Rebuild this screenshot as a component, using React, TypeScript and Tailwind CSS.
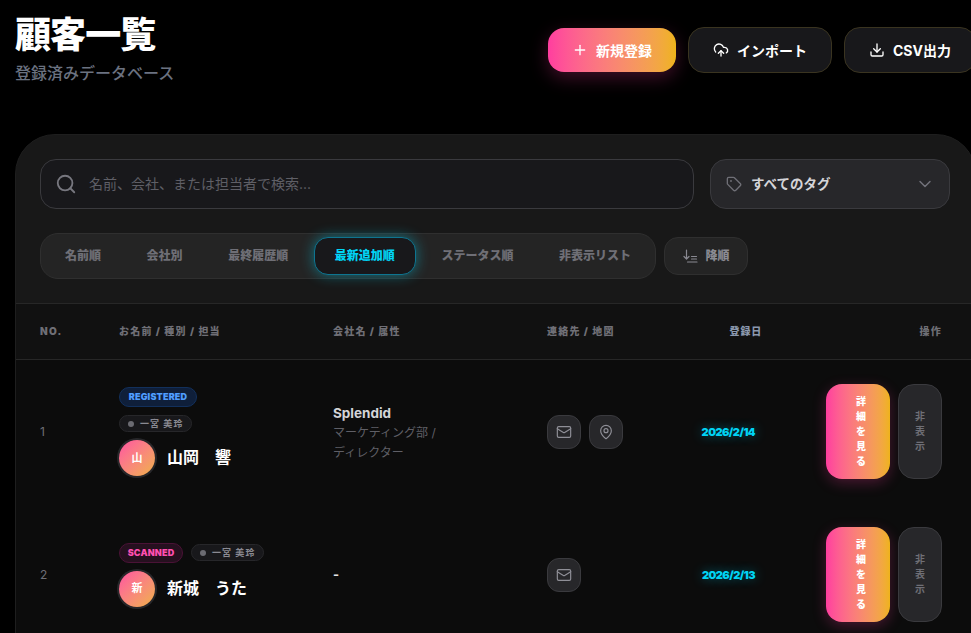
import { Plus, CloudUpload, Download, Search, Tag, ChevronDown, Mail, MapPin } from "lucide-react";

const tabs = ["名前順", "会社別", "最終履歴順", "最新追加順", "ステータス順", "非表示リスト"];

function Actions() {
  return (
    <div className="flex justify-end gap-2">
      <button className="flex h-[95px] w-16 flex-col items-center justify-center rounded-[16px] bg-gradient-to-r from-[#ff3d9f] to-[#efb318] pl-[6px] text-[10px] leading-[15px] font-black text-white shadow-[0_4px_14px_rgba(255,61,159,0.25)]">
        {"詳細を見る".split("").map((c) => (<span key={c}>{c}</span>))}
      </button>
      <button className="flex h-[95px] w-11 flex-col items-center justify-center rounded-[16px] border border-[#3a3a3e] bg-[#27272a] text-[10px] leading-[15px] font-bold text-[#6f6f76]">
        {"非表示".split("").map((c) => (<span key={c}>{c}</span>))}
      </button>
    </div>
  );
}

function IconBox({ children }: { children: React.ReactNode }) {
  return (
    <div className="flex h-[34px] w-[34px] items-center justify-center rounded-[12px] border border-[#3a3a3e] bg-[#27272a] text-[#8f8f97]">
      {children}
    </div>
  );
}

function Avatar({ c }: { c: string }) {
  return (
    <div className="flex h-9 w-9 shrink-0 items-center justify-center rounded-full bg-gradient-to-br from-[#ff4fa0] to-[#efb040] text-[11px] font-bold text-white ring-2 ring-[#27272a]">
      {c}
    </div>
  );
}

function Assignee() {
  return (
    <span className="flex h-[17px] w-[73px] shrink-0 items-center gap-[6px] rounded-full border border-[#27272a] bg-[#18181b] pl-[8px] text-[9px] font-bold tracking-[0.12em] whitespace-nowrap text-[#8a8a92]">
      <span className="h-[6px] w-[6px] shrink-0 rounded-full bg-[#6b6b72]" />
      一宮 美玲
    </span>
  );
}

const grid = "grid grid-cols-[79px_214px_214px_92px_122px_1fr] items-center pl-[24px] pr-[33px]";
const date = "mt-[2px] pr-[6px] text-right text-[11px] font-black tracking-tighter text-[#00d4f5] [text-shadow:0_0_12px_rgba(0,212,245,0.45)]";

export default function App() {
  return (
    <div
      className="h-[633px] w-[971px] overflow-hidden bg-black pl-[15px] text-white"
      style={{ fontFamily: "Inter, 'Noto Sans CJK JP', sans-serif" }}
    >
      <div className="w-[961px]">
        <header className="flex h-[134px] items-start justify-between">
          <div className="pt-[11px]">
            <h1 className="text-[36px] leading-[48px] font-black tracking-tight">顧客一覧</h1>
            <p className="mt-[3px] text-[16px] leading-[22px] font-medium text-[#6b7280]">登録済みデータベース</p>
          </div>
          <div className="flex items-center gap-3 pt-[27px]">
            <button className="flex h-11 w-32 items-center justify-center gap-2 rounded-[16px] bg-gradient-to-r from-[#ff3d9f] to-[#efb318] text-[14px] font-bold shadow-[0_6px_18px_rgba(255,61,159,0.25)]">
              <Plus size={16} strokeWidth={2} />新規登録
            </button>
            <button className="flex h-[46px] w-36 items-center justify-center gap-2 rounded-[16px] border border-[#3a3420] bg-[#18181b] text-[14px] font-bold">
              <CloudUpload size={16} strokeWidth={2} />インポート
            </button>
            <button className="flex h-[46px] w-[132px] items-center justify-center gap-2 rounded-[16px] border border-[#3a3420] bg-[#18181b] text-[14px] font-bold">
              <Download size={16} strokeWidth={2} />CSV出力
            </button>
          </div>
        </header>

        <section className="h-[520px] rounded-t-[40px] border border-[#1e1e1e] bg-[#181818]">
          <div className="flex gap-4 px-[24px] pt-[24px]">
            <div className="flex h-[50px] w-[654px] items-center gap-3 rounded-[16px] border border-[#3a3a3e] bg-[#18181b] px-[14px]">
              <Search size={22} className="text-[#77777f]" strokeWidth={2} />
              <span className="-mt-[1px] text-[14px] text-[#5f5f66]">名前、会社、または担当者で検索...</span>
            </div>
            <div className="flex h-[50px] w-[240px] items-center rounded-[16px] border border-[#3a3a3e] bg-[#27272a] pr-[14px] pl-[15px]">
              <Tag size={16} className="text-[#6f6f76]" strokeWidth={2} />
              <span className="ml-[9px] flex-1 text-[13.5px] font-bold text-[#d4d4d8]">すべてのタグ</span>
              <ChevronDown size={20} className="text-[#71717a]" strokeWidth={1.75} />
            </div>
          </div>

          <div className="mt-6 flex items-center gap-2 px-[24px]">
            <div className="flex h-[46px] items-center gap-[5.6px] rounded-[18px] border border-[#2f2f2f] bg-[#242424] px-1">
              {tabs.map((t) =>
                t === "最新追加順" ? (
                  <span
                    key={t}
                    className="flex h-[38px] items-center rounded-[14px] border border-[#0e7490] bg-[#18181b] px-5 text-[12px] font-black text-[#00d4f5] shadow-[0_0_14px_rgba(0,212,245,0.45)]"
                  >
                    {t}
                  </span>
                ) : (
                  <span key={t} className="flex h-[38px] items-center px-5 text-[12px] font-black text-[#6f6f76]">
                    {t}
                  </span>
                )
              )}
            </div>
            <button className="flex h-[38px] w-[84px] items-center justify-center gap-[7px] rounded-[14px] border border-[#2f2f2f] bg-[#242424] text-[12px] font-black text-[#8a8a92]">
              <svg width="16" height="16" viewBox="0 0 16 16" fill="none" stroke="currentColor" strokeWidth="1.2" strokeLinecap="round" strokeLinejoin="round">
                <path d="M3.5 2v9M1 8.5 3.5 11 6 8.5" />
                <path d="M8.5 8.5h5M8.5 11h5M4.5 14h9.5" />
              </svg>
              降順
            </button>
          </div>

          <div className={`${grid} mt-6 h-[57px] border-y border-[#272727] bg-[#111111] text-[10px] font-black tracking-[0.12em] whitespace-nowrap text-[#6f6f76]`}>
            <span>NO.</span>
            <span>お名前 / 種別 / 担当</span>
            <span>会社名 / 属性</span>
            <span>連絡先 / 地図</span>
            <span className="-mr-[1px] text-right tracking-[0.08em] text-[#8b98ad]">登録日</span>
            <span className="text-right">操作</span>
          </div>

          <div className="bg-[#0c0c0c]">
            <div className={`${grid} h-[143px]`}>
              <span className="text-[12px] text-[#6f6f76]">1</span>
              <div className="flex flex-col gap-2">
                <span className="flex h-5 w-[78px] items-center justify-center rounded-full border border-[#12305c] bg-[#0f1f3a] text-[9px] font-black tracking-[0.02em] text-[#4f9dff]">REGISTERED</span>
                <Assignee />
                <div className="flex items-center gap-3">
                  <Avatar c="山" />
                  <span className="-mt-[2px] text-[16px] font-bold">山岡　響</span>
                </div>
              </div>
              <div className="pt-[2px]">
                <p className="text-[13.5px] leading-[20px] font-bold text-[#d4d4d8]">Splendid</p>
                <p className="w-[110px] text-[12px] leading-[20px] text-[#5f5f66]">マーケティング部 / ディレクター</p>
              </div>
              <div className="flex gap-2">
                <IconBox><Mail size={16} strokeWidth={1.75} /></IconBox>
                <IconBox><MapPin size={16} strokeWidth={1.75} /></IconBox>
              </div>
              <span className={date}>2026/2/14</span>
              <Actions />
            </div>
            <div className={`${grid} h-[143px]`}>
              <span className="text-[12px] text-[#6f6f76]">2</span>
              <div className="flex flex-col gap-2">
                <div className="flex items-center gap-2">
                  <span className="flex h-5 w-16 items-center justify-center rounded-full border border-[#4a1236] bg-[#26101f] text-[9px] font-black tracking-[0.02em] text-[#ff4fb0]">SCANNED</span>
                  <Assignee />
                </div>
                <div className="flex items-center gap-3">
                  <Avatar c="新" />
                  <span className="-mt-[2px] text-[16px] font-bold">新城　うた</span>
                </div>
              </div>
              <span className="text-[13px] font-bold text-[#e4e4e7]">-</span>
              <div className="flex gap-2">
                <IconBox><Mail size={16} strokeWidth={1.75} /></IconBox>
              </div>
              <span className={date}>2026/2/13</span>
              <Actions />
            </div>
          </div>
        </section>
      </div>
    </div>
  );
}
